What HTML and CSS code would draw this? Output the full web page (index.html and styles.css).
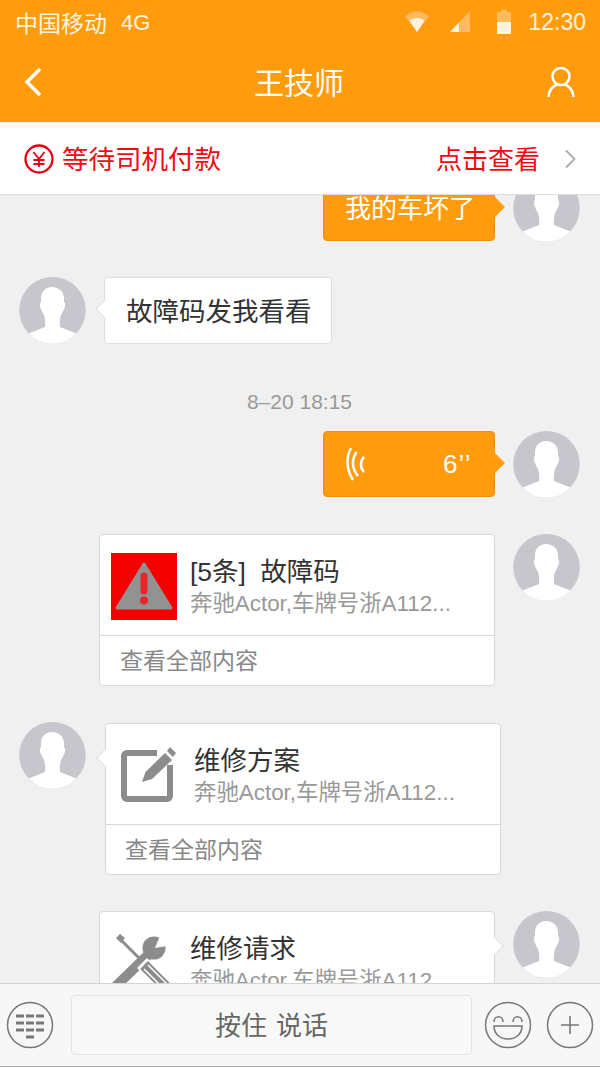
FILE: index.html
```html
<!DOCTYPE html>
<html lang="en">
<head>
    <meta charset="UTF-8">
    <meta name="viewport" content="width=device-width, initial-scale=1.0">
    <title>王技师</title>
    <link rel="stylesheet" href="styles.css">
</head>
<body>
    <svg class="defs" width="0" height="0">
        <symbol id="avatar" viewBox="0 0 67 67">
            <circle cx="33.5" cy="33.5" r="33.5" fill="#dcdcdc"/>
            <circle cx="33.5" cy="33" r="33" fill="#c6c6cc"/>
            <path d="M33 10C26 10 22 15 22 21.500V25C20.500 26 20.500 29 21.500 31 22.500 34 24 36 25 38 26 41 26.500 46 26 50L9.500 56.500A33 33 0 0 0 57.500 56.500L41 50C40.500 46 41 41 42 38 43 36 44.500 34 45.500 31 46.500 29 46.500 26 45 25V21.500C45 15 40.500 10 33 10Z" fill="#fff"/>
        </symbol>
    </svg>

    <header class="top">
        <div class="status">
            <span class="carrier">中国移动</span>
            <span class="net">4G</span>
            <svg class="ico-wifi" width="24" height="22" viewBox="0 0 24 22"><path d="M0 5.500C3 2.500 7.500.5 12 .5s9 2 12 5L12 21z" fill="#ffb95f"/><path d="M4.500 9.500C6.500 8 9 7 12 7s5.500 1 7.500 2.500L12 21z" fill="#fff3e0"/></svg>
            <svg class="ico-signal" width="20" height="22" viewBox="0 0 20 22"><path d="M20 0v21H0z" fill="#ffb95f"/><path d="M9 11.500V21H0z" fill="#fff3e0"/></svg>
            <svg class="ico-batt" width="14" height="24" viewBox="0 0 14 24"><path d="M4 0h6v2h4v22H0V2h4z" fill="#ffb95f"/><path d="M0 12h14v12H0z" fill="#fff3e0"/></svg>
            <span class="clock">12:30</span>
        </div>
        <div class="nav">
            <svg class="back" width="18" height="30" viewBox="0 0 18 30"><path d="M16 2 3 15l13 13" fill="none" stroke="#fff" stroke-width="3.500"/></svg>
            <h1 class="nav-title">王技师</h1>
            <svg class="me" width="28" height="32" viewBox="0 0 28 32"><circle cx="14" cy="10.500" r="8.500" fill="none" stroke="#fff" stroke-width="2.500"/><path d="M1.500 31c0-6.500 4.500-11 8.500-12.500M26.500 31c0-6.500-4.500-11-8.500-12.500" fill="none" stroke="#fff" stroke-width="2.500"/></svg>
        </div>
    </header>

    <div class="notice">
        <svg class="yen" width="30" height="30" viewBox="0 0 30 30">
            <circle cx="15" cy="15" r="13.500" fill="none" stroke="#e60012" stroke-width="2.300"/>
            <path d="M9.500 8 15 15l5.500-7M9.500 16h11M9.500 20h11M15 15v8" fill="none" stroke="#e60012" stroke-width="1.800"/>
        </svg>
        <span class="notice-text">等待司机付款</span>
        <span class="notice-link">点击查看</span>
        <svg class="chev" width="12" height="20" viewBox="0 0 12 20"><path d="M2 1.500 10.500 10 2 18.500" fill="none" stroke="#aaa" stroke-width="1.800"/></svg>
    </div>

    <main class="chat">
        <div class="list">
            <div class="row row-me">
                <div class="bubble bubble-me">我的车坏了</div>
                <svg class="avatar"><use href="#avatar"/></svg>
            </div>

            <div class="row row-other gap-35">
                <svg class="avatar"><use href="#avatar"/></svg>
                <div class="bubble bubble-other">故障码发我看看</div>
            </div>

            <div class="time">8–20 18:15</div>

            <div class="row row-me">
                <div class="bubble bubble-me voice">
                    <svg width="22" height="34" viewBox="0 0 22 34"><path d="M7 1C2 10 2 22 9 33M12.500 5C7.500 13 7.500 21 14 29M20 10C16 14 16 21 20 25" fill="none" stroke="#fff" stroke-width="2.500"/></svg>
                    <span class="secs">6’’</span>
                </div>
                <svg class="avatar"><use href="#avatar"/></svg>
            </div>

            <div class="row row-me gap-36">
                <div class="card">
                    <div class="card-main">
                        <svg class="thumb" width="66" height="67" viewBox="0 0 66 67">
                            <rect width="66" height="67" fill="#f50000"/>
                            <path d="M33 11 60 55H6z" fill="#929292" stroke="#929292" stroke-width="3" stroke-linejoin="round"/>
                            <path d="M33 23v15" stroke="#e8262c" stroke-width="7" stroke-linecap="round"/>
                            <circle cx="33" cy="47.500" r="4" fill="#e8262c"/>
                        </svg>
                        <div class="card-text">
                            <div class="card-title spaced">[5条] 故障码</div>
                            <div class="card-sub">奔驰Actor,车牌号浙A112...</div>
                        </div>
                    </div>
                    <div class="card-foot">查看全部内容</div>
                </div>
                <svg class="avatar"><use href="#avatar"/></svg>
            </div>

            <div class="row row-other gap-36">
                <svg class="avatar"><use href="#avatar"/></svg>
                <div class="card card-left">
                    <div class="card-main">
                        <svg class="thumb" width="66" height="67" viewBox="0 0 66 67">
                            <path d="M40 11H10a3 3 0 0 0-3 3v40a3 3 0 0 0 3 3h40a3 3 0 0 0 3-3V23" fill="none" stroke="#8c8c8c" stroke-width="6"/>
                            <path d="M25 40 28.500 30 48 11l7 7-20 19z" fill="#8c8c8c"/>
                            <path d="M50 9l3-4 6 6-3 4z" fill="#8c8c8c"/>
                        </svg>
                        <div class="card-text">
                            <div class="card-title">维修方案</div>
                            <div class="card-sub">奔驰Actor,车牌号浙A112...</div>
                        </div>
                    </div>
                    <div class="card-foot">查看全部内容</div>
                </div>
            </div>

            <div class="row row-me gap-36">
                <div class="card card-tail">
                    <div class="card-main">
                        <svg class="thumb" width="66" height="67" viewBox="0 0 66 67">
                            <path d="M9 9 31 31" stroke="#8c8c8c" stroke-width="3"/>
                            <path d="M5 8l4-4 5 4-4 5z" fill="#8c8c8c"/>
                            <circle cx="43" cy="18" r="11.500" fill="#8c8c8c"/>
                            <path d="M44 18 50 3 62 15z" fill="#fff"/>
                            <path d="M40 22 3 58" stroke="#8c8c8c" stroke-width="10"/>
                            <path d="M31 33 60 62" stroke="#fff" stroke-width="14"/>
                            <path d="M33 35 60 62" stroke="#8c8c8c" stroke-width="11"/>
                            <path d="M37 35l22 22M33 39l22 22" stroke="#fff" stroke-width="1.500"/>
                        </svg>
                        <div class="card-text">
                            <div class="card-title">维修请求</div>
                            <div class="card-sub">奔驰Actor,车牌号浙A112...</div>
                        </div>
                    </div>
                </div>
                <svg class="avatar"><use href="#avatar"/></svg>
            </div>
        </div>
    </main>

    <footer class="inputbar">
        <svg class="round-btn" width="48" height="48" viewBox="0 0 48 48">
            <circle cx="24" cy="24" r="22.500" fill="none" stroke="#777" stroke-width="1.500"/>
            <path d="M10 15h8M20 15h8M30 15h8M10 22h8M20 22h8M30 22h8M10 29h8M20 29h8M30 29h8M20 36h8" stroke="#777" stroke-width="3"/>
        </svg>
        <div class="talk">按住 说话</div>
        <svg class="round-btn" width="48" height="48" viewBox="0 0 48 48">
            <circle cx="24" cy="24" r="22.500" fill="none" stroke="#777" stroke-width="1.500"/>
            <path d="M10 21c0-7 9-7 9 0M29 21c0-7 9-7 9 0" fill="none" stroke="#777" stroke-width="1.600"/>
            <path d="M10 25h28c0 8-6 13-14 13s-14-5-14-13z" fill="none" stroke="#777" stroke-width="1.600"/>
        </svg>
        <svg class="round-btn" width="48" height="48" viewBox="0 0 48 48">
            <circle cx="24" cy="24" r="22.500" fill="none" stroke="#777" stroke-width="1.500"/>
            <path d="M15 24h18M24 15v18" stroke="#777" stroke-width="1.600"/>
        </svg>
    </footer>
</body>
</html>
```

FILE: styles.css
```css
* {
    margin: 0;
    padding: 0;
    box-sizing: border-box;
}

html, body {
    height: 100%;
}

body {
    display: flex;
    flex-direction: column;
    height: 1067px;
    overflow: hidden;
    background-color: #f0f0f0;
    font-family: "Liberation Sans", "Noto Sans CJK SC", sans-serif;
    color: #333;
}

.defs {
    position: absolute;
}

.top {
    height: 122px;
    flex: none;
    background-color: #ff9c0e;
    color: #fff;
}

.status {
    display: flex;
    align-items: center;
    height: 44px;
    padding: 0 14px 0 15px;
    font-size: 23px;
    color: #fff3e0;
}

.net {
    margin-left: 14px;
    font-size: 22px;
    padding-top: 1px;
}

.ico-wifi {
    margin-left: auto;
}

.ico-signal {
    margin-left: 21px;
}

.ico-batt {
    margin-left: 27px;
}

.clock {
    margin-left: 17px;
    font-size: 23px;
}

.nav {
    display: flex;
    align-items: center;
    justify-content: space-between;
    height: 76px;
    padding: 0 25px 0 24px;
}

.nav-title {
    margin: 0 0 2px 9px;
    font-size: 30px;
    font-weight: 400;
}

.notice {
    display: flex;
    align-items: center;
    flex: none;
    height: 73px;
    padding: 0 24px 0 24px;
    background-color: #fff;
    border-top: 1px solid #eee;
    border-bottom: 1px solid #ddd;
    color: #f00a14;
    font-size: 26px;
}

.notice-text {
    margin: 0 0 3px 8px;
    font-size: 26.500px;
}

.notice-link {
    margin: 0 0 3px auto;
}

.chev {
    margin-left: 24px;
}

.chat {
    flex: 1;
    min-height: 0;
    overflow: hidden;
}

.list {
    margin-top: -20px;
    padding: 0 20px 0 19px;
}

.row {
    display: flex;
    align-items: flex-start;
    gap: 18px;
}

.row-me {
    justify-content: flex-end;
}

.gap-35 {
    margin-top: 35px;
}

.gap-36 {
    margin-top: 36px;
}

.avatar {
    width: 67px;
    height: 67px;
    flex: none;
}

.bubble {
    position: relative;
    display: flex;
    align-items: center;
    height: 66px;
    padding-bottom: 3px;
    border-radius: 4px;
    font-size: 26px;
}

.bubble-me {
    width: 172px;
    padding-left: 21px;
    background-color: #ff9c0e;
    border: 1px solid #ef9108;
    color: #fff;
}

.bubble-me::after {
    content: "";
    position: absolute;
    top: 24px;
    right: -8px;
    width: 14px;
    height: 14px;
    background-color: #ff9c0e;
    transform: rotate(45deg);
}

.bubble-other {
    width: 228px;
    height: 67px;
    padding-left: 21px;
    background-color: #fff;
    border: 1px solid #ddd;
    font-size: 26.500px;
}

.bubble-other::before,
.card-left::before {
    content: "";
    position: absolute;
    top: 24px;
    left: -7px;
    width: 13px;
    height: 13px;
    background-color: #fff;
    border-left: 1px solid #ddd;
    border-bottom: 1px solid #ddd;
    transform: rotate(45deg);
}

.time {
    margin-top: 47px;
    margin-bottom: 18px;
    height: 22px;
    line-height: 22px;
    text-align: center;
    font-size: 21px;
    color: #999;
}

.voice {
    padding-left: 20px;
    padding-bottom: 0;
}

.secs {
    margin-left: 77px;
    font-size: 26px;
    letter-spacing: 1px;
}

.card {
    position: relative;
    width: 396px;
    height: 152px;
    flex: none;
    background-color: #fff;
    border: 1px solid #d8d8d8;
    border-radius: 4px;
}

.card-left {
    margin-top: 1px;
    margin-left: 1px;
}

.card-left::before {
    top: 27px;
}

.card-tail {
    height: 200px;
}

.card-tail::after {
    content: "";
    position: absolute;
    top: 27px;
    right: -7px;
    width: 13px;
    height: 13px;
    background-color: #fff;
    border-top: 1px solid #ddd;
    border-right: 1px solid #ddd;
    transform: rotate(45deg);
}

.card-main {
    display: flex;
    align-items: flex-start;
    height: 101px;
    padding: 18px 0 0 11px;
    border-bottom: 1px solid #d8d8d8;
}

.thumb {
    flex: none;
}

.card-text {
    margin-left: 13px;
    padding-top: 2px;
}

.card-left .card-text {
    margin-left: 11px;
}

.card-title {
    height: 34px;
    line-height: 34px;
    font-size: 26.500px;
    color: #333;
    white-space: nowrap;
}

.spaced {
    word-spacing: 7px;
}

.card-sub {
    height: 30px;
    line-height: 30px;
    font-size: 22.400px;
    color: #999;
    white-space: nowrap;
}

.card-foot {
    height: 49px;
    line-height: 50px;
    padding-left: 20px;
    font-size: 23px;
    color: #888;
}

.card-left .card-foot {
    padding-left: 19px;
}

.inputbar {
    display: flex;
    align-items: center;
    flex: none;
    height: 84px;
    padding: 0 6px 0 6px;
    background-color: #f7f7f7;
    border-top: 1px solid #d4d4d4;
    border-bottom: 1px solid #aaa;
}

.talk {
    width: 401px;
    height: 60px;
    margin: 0 12px 0 17px;
    line-height: 60px;
    text-align: center;
    word-spacing: 2px;
    background-color: #f8f8f8;
    border: 1px solid #e4e4e4;
    border-radius: 4px;
    font-size: 26px;
    color: #666;
}

.round-btn {
    flex: none;
}

.round-btn:last-child {
    margin-left: 14px;
}
```
